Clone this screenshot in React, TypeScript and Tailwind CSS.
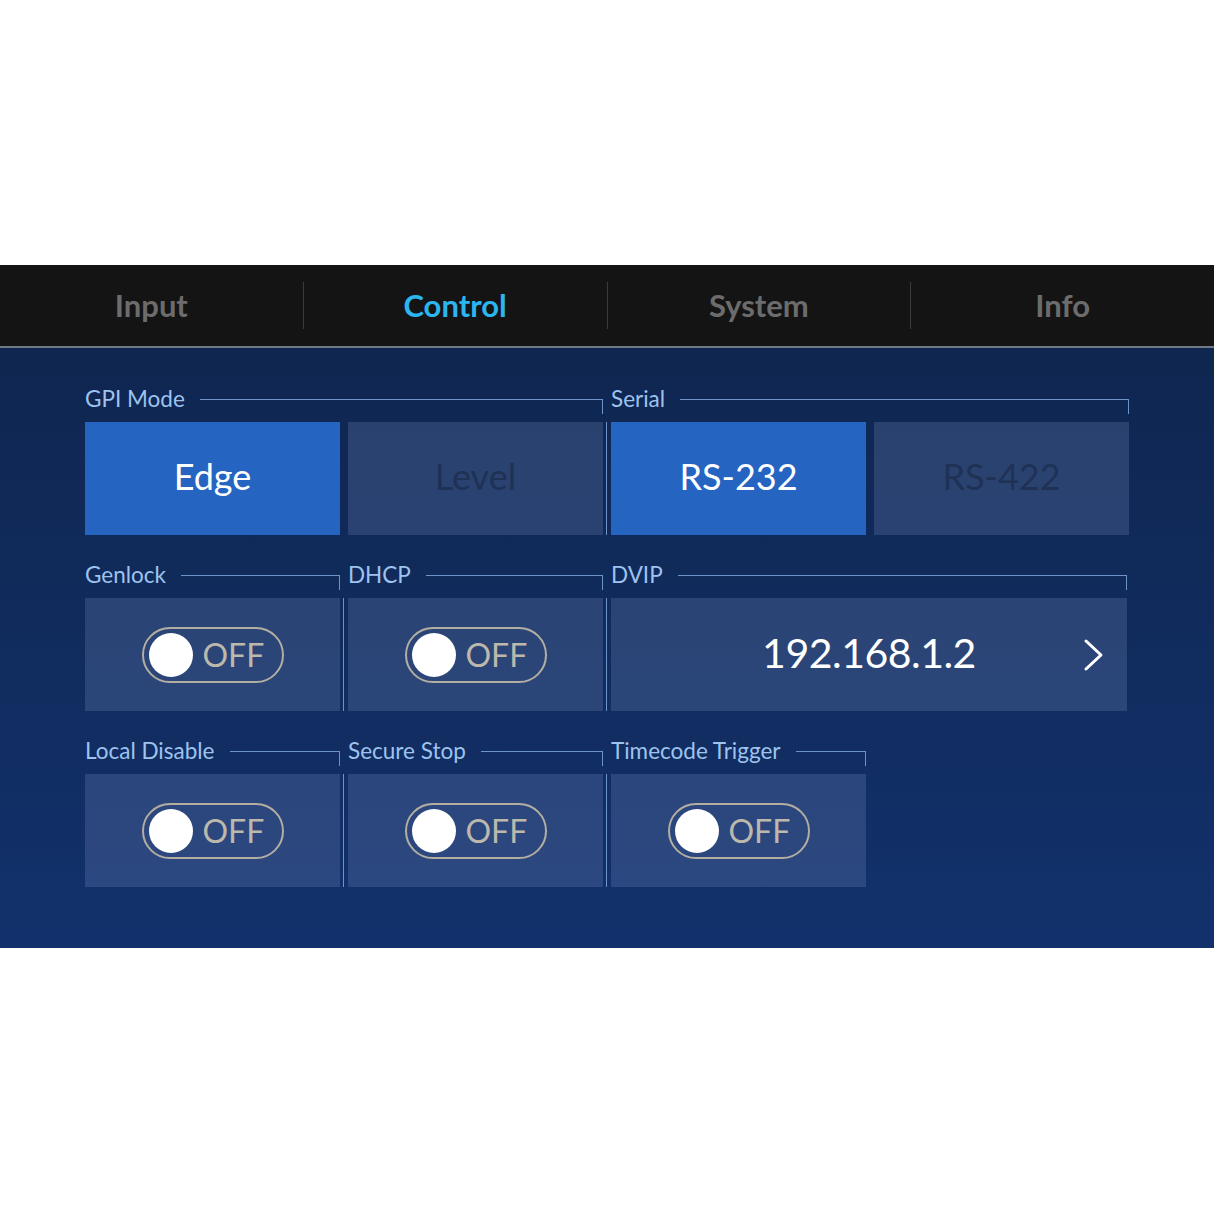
import React from "react";

const LINE = "bg-[#6d93c8]";

function Tabs() {
  const tabs = ["Input", "Control", "System", "Info"];
  return (
    <div className="h-[83px] bg-[#141414] border-b-2 border-[#6f7a88] flex items-center">
      {tabs.map((t, i) => (
        <React.Fragment key={t}>
          {i > 0 && <div className="w-px h-[47px] bg-[#3b3b3b]" />}
          <div
            className={
              "flex-1 text-center text-[31px] font-bold leading-none " +
              (t === "Control" ? "text-[#2bb6ef]" : "text-[#6c6c6c]")
            }
          >
            {t}
          </div>
        </React.Fragment>
      ))}
    </div>
  );
}

function Group({
  label,
  span,
  divider,
  trim,
  children,
}: {
  label: string;
  span: 1 | 2;
  divider?: boolean;
  trim?: boolean;
  children: React.ReactNode;
}) {
  return (
    <div className={(span === 2 ? "col-span-2 flex flex-col" : "flex flex-col") + (trim ? " mr-[2px]" : "")}>
      <div className="flex items-start h-[30px]">
        <span className="text-[22.5px] leading-[30px] text-[#9ec3ee] whitespace-nowrap">{label}</span>
        <div className="ml-[15px] mt-[15px] flex-1 h-[15px] border-t border-r border-[#6d93c8]" />
      </div>
      <div className={divider ? "mt-2 flex -ml-[5px]" : "mt-2 flex"}>
        {divider && <div className={"w-px shrink-0 mr-[4px] " + LINE} />}
        <div className="flex-1">{children}</div>
      </div>
    </div>
  );
}

function Choice({ text, active }: { text: string; active?: boolean }) {
  return (
    <div
      className={
        "h-[113px] flex items-center justify-center pb-[6px] text-[36px] leading-none " +
        (active ? "bg-[#2664c2] text-white" : "bg-[#96abdc]/20 text-[#1f3255]")
      }
    >
      {text}
    </div>
  );
}

function Toggle() {
  return (
    <div className="h-[113px] bg-[#96abdc]/20 flex items-center justify-center">
      <div className="w-[142px] h-[56px] rounded-full border-2 border-[#b3aea2] flex items-center pl-[5px]">
        <div className="w-[44px] h-[44px] rounded-full bg-white" />
        <span className="ml-[10px] text-[32px] leading-none text-[#bdb8ac]">OFF</span>
      </div>
    </div>
  );
}

function Dvip() {
  return (
    <div className="h-[113px] bg-[#96abdc]/20 grid grid-cols-[1fr_auto_1fr] items-center">
      <div />
      <span className="text-[41px] leading-none text-white tracking-[-0.5px] pb-[4px]">192.168.1.2</span>
      <div className="flex justify-end pr-[22px]">
        <svg width="22" height="34" viewBox="0 0 22 34" fill="none">
          <path d="M3 3 L18 17 L3 31" stroke="white" strokeWidth="3" strokeLinecap="round" strokeLinejoin="round" />
        </svg>
      </div>
    </div>
  );
}

export default function App() {
  return (
    <div className="w-[1214px] min-h-[1214px] bg-white" style={{ fontFamily: "Lato, 'Noto Sans', sans-serif" }}>
      <div className="h-[265px]" />
      <Tabs />
      <div className="h-[600px] bg-linear-to-b from-[#0f2650] to-[#12316c] pl-[85px] pt-[36px]">
        <div className="w-[1044px] grid grid-cols-4 gap-x-[8px] gap-y-[25px]">
          <Group label="GPI Mode" span={2}>
            <div className="grid grid-cols-2 gap-x-[8px]">
              <Choice text="Edge" active />
              <Choice text="Level" />
            </div>
          </Group>
          <Group label="Serial" span={2} divider>
            <div className="grid grid-cols-2 gap-x-[8px]">
              <Choice text="RS-232" active />
              <Choice text="RS-422" />
            </div>
          </Group>

          <Group label="Genlock" span={1}>
            <Toggle />
          </Group>
          <Group label="DHCP" span={1} divider>
            <Toggle />
          </Group>
          <Group label="DVIP" span={2} divider trim>
            <Dvip />
          </Group>

          <Group label="Local Disable" span={1}>
            <Toggle />
          </Group>
          <Group label="Secure Stop" span={1} divider>
            <Toggle />
          </Group>
          <Group label="Timecode Trigger" span={1} divider>
            <Toggle />
          </Group>
        </div>
      </div>
    </div>
  );
}
